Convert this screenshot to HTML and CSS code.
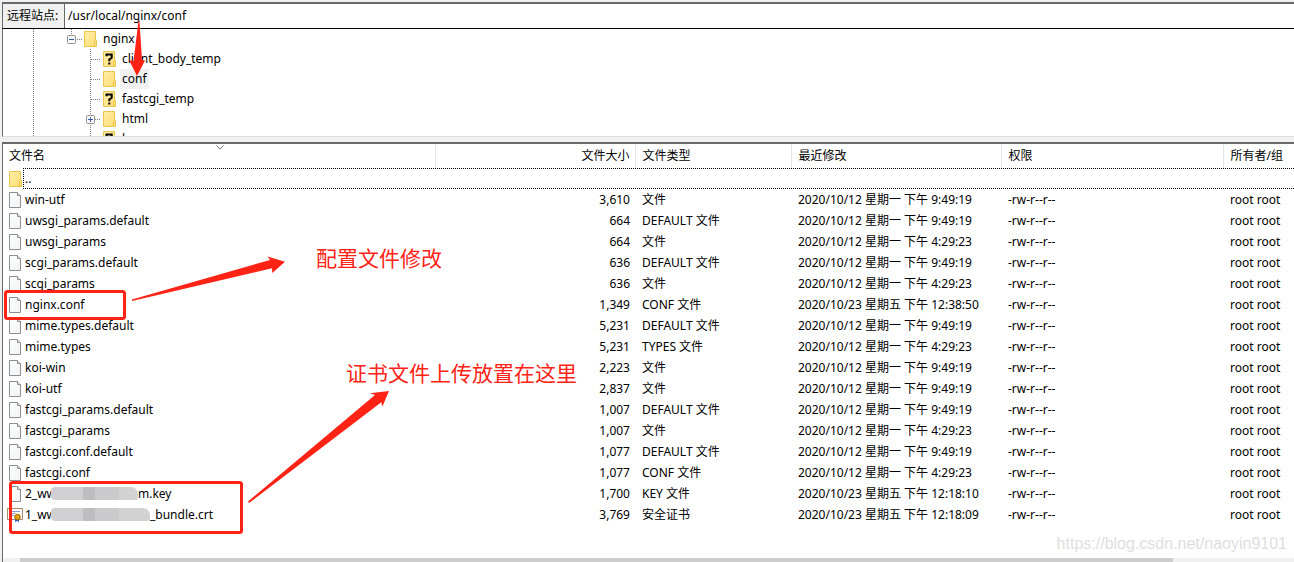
FILE: index.html
```html
<!DOCTYPE html>
<html lang="zh-CN">
<head>
<meta charset="utf-8">
<title>远程站点</title>
<link rel="stylesheet" href="styles.css">
</head>
<body>
<svg class="defs" aria-hidden="true">
  <defs>
    <linearGradient id="gold" x1="0" y1="0" x2="1" y2="1"><stop offset="0" stop-color="#ffeeaa"/><stop offset="1" stop-color="#ffdc73"/></linearGradient>
    <linearGradient id="paper" x1="0" y1="0" x2="1" y2="1"><stop offset="0" stop-color="#ffffff"/><stop offset="1" stop-color="#f0f2f4"/></linearGradient>
    <symbol id="folder" viewBox="0 0 13 16"><path d="M.5.5h11v9h1v6H.5z" fill="url(#gold)" stroke="#e9c54b"/><path d="M10.500 15.500v-5l1-1" fill="none" stroke="#e9c54b"/></symbol>
    <symbol id="unknown" viewBox="0 0 13 16"><use href="#folder" width="13" height="16"/><path d="M3.500 5.200V3.500h5.200v3.300L6.300 8.500v1.800M6.300 11.500v2" fill="none" stroke="#000" stroke-width="2"/></symbol>
    <symbol id="file" viewBox="0 0 12 16"><path d="M.5.500h8l3 3v12H.5z" fill="url(#paper)" stroke="#8c8f91"/><path d="M8.500.500v3h3" fill="#e4e6e8" stroke="#8c8f91"/></symbol>
    <symbol id="cert" viewBox="0 0 16 16"><path d="M.5 1.500h15v11H.5z" fill="#fffdf5" stroke="#a68a70"/><path d="M4 4.500h9M4 6.500h4M4 8.500h3" stroke="#8c9cdd"/><path d="M8 11v4l2-1 2 1v-4z" fill="#2863c8"/><circle cx="10.500" cy="10" r="2.800" fill="#e0a014" stroke="#a87009"/></symbol>
    <symbol id="minus" viewBox="0 0 9 9"><rect x=".5" y=".5" width="8" height="8" rx="1" fill="#f8f8f8" stroke="#919191"/><path d="M2 4.500h5" stroke="#3b5ca8"/></symbol>
    <symbol id="plus" viewBox="0 0 9 9"><use href="#minus" width="9" height="9"/><path d="M4.500 2v5" stroke="#3b5ca8"/></symbol>
  </defs>
</svg>
<main class="panel">
  <div class="address">
    <label for="path">远程站点:</label>
    <input id="path" type="text" value="/usr/local/nginx/conf">
  </div>
  <div class="tree">
    <ul class="level">
      <li class="node root"><svg class="toggle"><use href="#minus"/></svg><svg class="folder"><use href="#folder"/></svg><span>nginx</span></li>
      <li>
        <ul class="children">
          <li class="node"><svg class="folder"><use href="#unknown"/></svg><span>client_body_temp</span></li>
          <li class="node"><svg class="folder"><use href="#folder"/></svg><span class="selected">conf</span></li>
          <li class="node"><svg class="folder"><use href="#unknown"/></svg><span>fastcgi_temp</span></li>
          <li class="node"><svg class="toggle"><use href="#plus"/></svg><svg class="folder"><use href="#folder"/></svg><span>html</span></li>
          <li class="node"><svg class="folder"><use href="#unknown"/></svg><span>logs</span></li>
        </ul>
      </li>
    </ul>
  </div>
  <section class="files">
    <table>
      <colgroup><col class="c-name"><col class="c-size"><col class="c-type"><col class="c-date"><col class="c-mode"><col></colgroup>
      <thead><tr><th>文件名<svg class="sort" viewBox="0 0 8 5"><path d="M.5.500 4 4 7.500.500" fill="none" stroke="#7c7c7c"/></svg></th><th class="num">文件大小</th><th>文件类型</th><th>最近修改</th><th>权限</th><th>所有者/组</th></tr></thead>
      <tbody>
        <tr><td colspan="6" class="up"><div class="name"><svg class="folder"><use href="#folder"/></svg><span class="focus">..</span></div></td></tr>
        <tr><td><div class="name"><svg class="file"><use href="#file"/></svg>win-utf</div></td><td class="num">3,610</td><td>文件</td><td>2020/10/12 星期一 下午 9:49:19</td><td>-rw-r--r--</td><td>root root</td></tr>
        <tr><td><div class="name"><svg class="file"><use href="#file"/></svg>uwsgi_params.default</div></td><td class="num">664</td><td>DEFAULT 文件</td><td>2020/10/12 星期一 下午 9:49:19</td><td>-rw-r--r--</td><td>root root</td></tr>
        <tr><td><div class="name"><svg class="file"><use href="#file"/></svg>uwsgi_params</div></td><td class="num">664</td><td>文件</td><td>2020/10/12 星期一 下午 4:29:23</td><td>-rw-r--r--</td><td>root root</td></tr>
        <tr><td><div class="name"><svg class="file"><use href="#file"/></svg>scgi_params.default</div></td><td class="num">636</td><td>DEFAULT 文件</td><td>2020/10/12 星期一 下午 9:49:19</td><td>-rw-r--r--</td><td>root root</td></tr>
        <tr><td><div class="name"><svg class="file"><use href="#file"/></svg>scgi_params</div></td><td class="num">636</td><td>文件</td><td>2020/10/12 星期一 下午 4:29:23</td><td>-rw-r--r--</td><td>root root</td></tr>
        <tr><td><div class="name"><svg class="file"><use href="#file"/></svg>nginx.conf</div></td><td class="num">1,349</td><td>CONF 文件</td><td>2020/10/23 星期五 下午 12:38:50</td><td>-rw-r--r--</td><td>root root</td></tr>
        <tr><td><div class="name"><svg class="file"><use href="#file"/></svg>mime.types.default</div></td><td class="num">5,231</td><td>DEFAULT 文件</td><td>2020/10/12 星期一 下午 9:49:19</td><td>-rw-r--r--</td><td>root root</td></tr>
        <tr><td><div class="name"><svg class="file"><use href="#file"/></svg>mime.types</div></td><td class="num">5,231</td><td>TYPES 文件</td><td>2020/10/12 星期一 下午 4:29:23</td><td>-rw-r--r--</td><td>root root</td></tr>
        <tr><td><div class="name"><svg class="file"><use href="#file"/></svg>koi-win</div></td><td class="num">2,223</td><td>文件</td><td>2020/10/12 星期一 下午 9:49:19</td><td>-rw-r--r--</td><td>root root</td></tr>
        <tr><td><div class="name"><svg class="file"><use href="#file"/></svg>koi-utf</div></td><td class="num">2,837</td><td>文件</td><td>2020/10/12 星期一 下午 9:49:19</td><td>-rw-r--r--</td><td>root root</td></tr>
        <tr><td><div class="name"><svg class="file"><use href="#file"/></svg>fastcgi_params.default</div></td><td class="num">1,007</td><td>DEFAULT 文件</td><td>2020/10/12 星期一 下午 9:49:19</td><td>-rw-r--r--</td><td>root root</td></tr>
        <tr><td><div class="name"><svg class="file"><use href="#file"/></svg>fastcgi_params</div></td><td class="num">1,007</td><td>文件</td><td>2020/10/12 星期一 下午 4:29:23</td><td>-rw-r--r--</td><td>root root</td></tr>
        <tr><td><div class="name"><svg class="file"><use href="#file"/></svg>fastcgi.conf.default</div></td><td class="num">1,077</td><td>DEFAULT 文件</td><td>2020/10/12 星期一 下午 9:49:19</td><td>-rw-r--r--</td><td>root root</td></tr>
        <tr><td><div class="name"><svg class="file"><use href="#file"/></svg>fastcgi.conf</div></td><td class="num">1,077</td><td>CONF 文件</td><td>2020/10/12 星期一 下午 4:29:23</td><td>-rw-r--r--</td><td>root root</td></tr>
        <tr><td><div class="name"><svg class="file"><use href="#file"/></svg><span class="prefix">2_ww</span><span class="mask"></span>m.key</div></td><td class="num">1,700</td><td>KEY 文件</td><td>2020/10/23 星期五 下午 12:18:10</td><td>-rw-r--r--</td><td>root root</td></tr>
        <tr><td><div class="name"><svg class="cert"><use href="#cert"/></svg><span class="prefix">1_ww</span><span class="mask wide"></span>_bundle.crt</div></td><td class="num">3,769</td><td>安全证书</td><td>2020/10/23 星期五 下午 12:18:09</td><td>-rw-r--r--</td><td>root root</td></tr>
      </tbody>
    </table>
    <div class="scrollbar"><div class="thumb"></div></div>
  </section>
</main>
<svg class="marks" aria-hidden="true">
  <g fill="#ff2315">
    <path d="M138.500 21h1L142 60l3 .5L137 76l-8-16 4.500 1z"/>
    <path d="M132 299.500 270 260l-2.500-3.500L285 261.700 272.300 273l-.3-4.700L132 301z"/>
    <path d="M248 501.500 375 395l-5-1.700 19-2.300-6.700 15.700-1-4.400L249 503z"/>
  </g>
  <g fill="none" stroke="#ff2315" stroke-width="3">
    <rect x="5.500" y="291.500" width="119" height="27" rx="2"/>
    <rect x="10.500" y="482.500" width="231" height="50" rx="2"/>
  </g>
</svg>
<div class="note config">配置文件修改</div>
<div class="note upload">证书文件上传放置在这里</div>
<div class="watermark">https://blog.csdn.net/naoyin9101</div>
</body>
</html>
```
FILE: styles.css
```css
* { box-sizing: border-box; }
body {
  margin: 0;
  position: relative;
  height: 100vh;
  overflow: hidden;
  background: #f0f0f0;
  color: #000;
  font: 12px/20px "Noto Sans", "Noto Sans CJK SC", sans-serif;
}
svg { flex: none; display: block; }
.defs { position: absolute; width: 0; height: 0; }
.panel { display: flex; flex-direction: column; height: 100%; padding: 2px 0 0 2px; }
.address {
  display: flex;
  height: 27px;
  flex: none;
  border-top: 2px solid #696969;
  border-left: 1px solid #696969;
  border-bottom: 1px solid #000;
}
.address label { width: 62px; padding: 2px 4px; border-right: 1px solid #696969; white-space: nowrap; }
.address input {
  flex: 1;
  min-width: 0;
  padding: 0 3px 1px;
  border: 0;
  outline: 0;
  background: #fff;
  font: inherit;
}
.tree {
  height: 108px;
  flex: none;
  overflow: hidden;
  padding-left: 30px;
  border-left: 1px solid #696969;
  border-bottom: 1px solid #dfdfdf;
  background: #fff;
}
ul { list-style: none; margin: 0; padding: 0; }
.level {
  padding-left: 34px;
  background: repeating-linear-gradient(#808080 0 1px, transparent 1px 2px) 0 0 / 1px 100% no-repeat;
}
.node { display: flex; align-items: center; height: 20px; }
.node span { padding: 0 2px; margin-left: 4px; }
.node .selected { background: #f0f0f0; }
.folder { width: 13px; height: 16px; }
.toggle { width: 9px; height: 9px; }
.node .folder { margin-left: 8px; }
.root {
  background:
    repeating-linear-gradient(#808080 0 1px, transparent 1px 2px) 4px 0 / 1px 5px no-repeat,
    repeating-linear-gradient(90deg, #808080 0 1px, transparent 1px 2px) 10px 10px / 6px 1px no-repeat;
}
.children {
  margin-left: 19px;
  background: repeating-linear-gradient(#808080 0 1px, transparent 1px 2px) 4px 0 / 1px 100% no-repeat;
}
.children .node {
  padding-left: 9px;
  background: repeating-linear-gradient(90deg, #808080 0 1px, transparent 1px 2px) 5px 10px / 10px 1px no-repeat;
}
.children .toggle { margin-left: -9px; }
.files {
  flex: 1;
  display: flex;
  flex-direction: column;
  margin-top: 5px;
  border-top: 2px solid #696969;
  border-left: 1px solid #696969;
  background: #fff;
  overflow: hidden;
}
table { width: 100%; table-layout: fixed; border-collapse: collapse; }
.c-name { width: 432px; }
.c-size { width: 200px; }
.c-type { width: 156px; }
.c-date { width: 210px; }
.c-mode { width: 222px; }
th, td { padding: 0 0 0 7px; text-align: left; font-weight: 400; white-space: nowrap; }
th:first-child, td:first-child { padding-left: 6px; }
th { position: relative; height: 24px; border-right: 1px solid #e5e5e5; }
th:last-child { border-right: 0; }
td { height: 21px; }
th.num, td.num { text-align: right; padding-right: 5px; }
.name { display: flex; align-items: center; height: 21px; }
.file { width: 12px; height: 16px; margin-right: 4px; }
.cert { width: 16px; height: 16px; margin: 0 2px 0 -2px; }
.up .folder { margin-right: 1px; }
.focus { flex: 1; height: 21px; padding-left: 1px; border: 1px dotted #000; border-right: 0; }
.sort { position: absolute; top: 1px; left: 213px; width: 8px; height: 5px; }
.prefix { width: 26px; }
.mask {
  position: relative;
  width: 87px;
  height: 13px;
  border-radius: 4px 7px 2px 4px;
  background: linear-gradient(90deg, #d0d0d2 0 32px, #bfbdc0 32px 44px, #cac9cc 44px 68px, #d3d3d3 68px);
}
.wide { width: 99px; }
.scrollbar { height: 4px; margin-top: auto; padding: 0 121px 0 17px; background: #f0f0f0; }
.thumb { height: 4px; background: #cdcdcd; }
.marks { position: absolute; top: 0; left: 0; width: 100%; height: 100%; pointer-events: none; }
.note { position: absolute; color: #ff2315; font-size: 21px; line-height: 28px; white-space: nowrap; font-family: "Noto Sans CJK SC", sans-serif; }
.config { left: 316px; top: 243px; }
.upload { left: 346px; top: 358px; }
.watermark { position: absolute; right: 7px; bottom: 8px; color: #dedede; font: 16px/20px "Liberation Sans", sans-serif; }
```
